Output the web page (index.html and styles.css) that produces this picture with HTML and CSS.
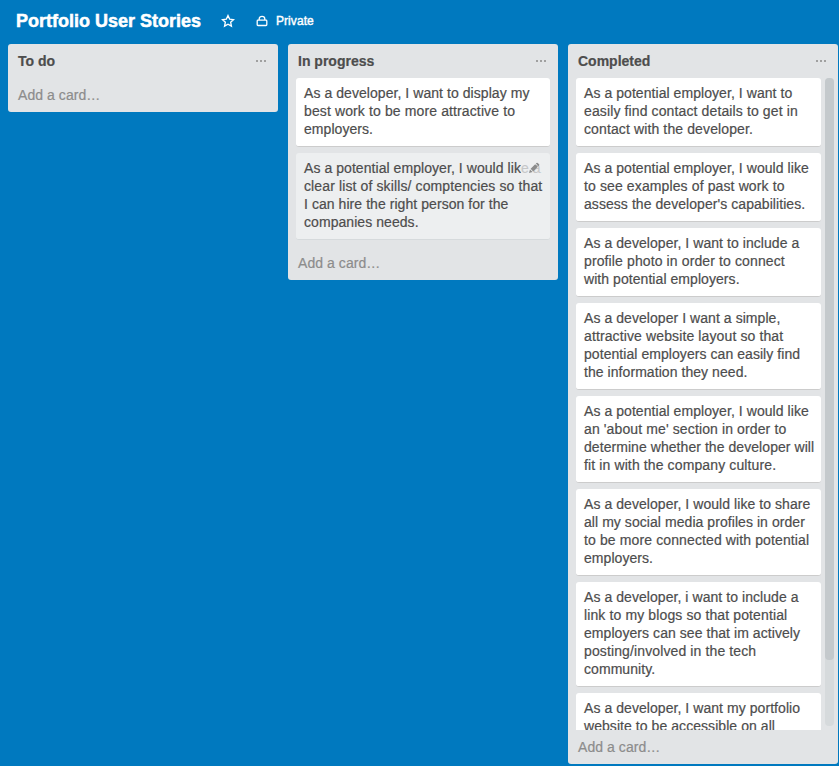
FILE: index.html
```
<!DOCTYPE html>
<html lang="en">
<head>
<meta charset="utf-8">
<title>Portfolio User Stories</title>
<link rel="stylesheet" href="styles.css">
</head>
<body>
<header class="board-header">
  <h1>Portfolio User Stories</h1>
  <svg class="star" viewBox="0 0 14 14"><path d="M7 1.5l1.65 3.6 3.9.5-2.9 2.65.8 3.9L7 10.2l-3.45 1.95.8-3.9L1.45 5.6l3.9-.5z"/></svg>
  <svg class="lock" viewBox="0 0 12 12"><rect x="1.2" y="5.2" width="9.6" height="5.3" rx=".8"/><path d="M3.2 5V3.8a2.8 2.4 0 0 1 5.6 0V5"/></svg>
  <span class="private">Private</span>
</header>
<main class="board">
  <section class="list">
    <div class="list-header"><h2>To do</h2><span class="menu"><i></i><i></i><i></i></span></div>
    <div class="cards"></div>
    <a class="add">Add a card…</a>
  </section>
  <section class="list">
    <div class="list-header"><h2>In progress</h2><span class="menu"><i></i><i></i><i></i></span></div>
    <div class="cards">
      <article class="card">As a developer, I want to display my<br><span class="wide">best work to be more attractive to</span><br>employers.</article>
      <article class="card hovered">As a potential employer, I would like a<br><span class="wide">clear list of skills/ comptencies so that</span><br>I can hire the right person for the<br>companies needs.<span class="edit"><svg viewBox="0 0 12 12"><path d="M1 11l1-3.6L4.6 10zM2.6 6.8l4.6-4.6 2.6 2.6-4.6 4.6zM7.8 1.6l.7-.7q.6-.5 1.2 0l1.4 1.4q.5.6 0 1.2l-.7.7z"/></svg></span></article>
    </div>
    <a class="add">Add a card…</a>
  </section>
  <section class="list full">
    <div class="list-header"><h2>Completed</h2><span class="menu"><i></i><i></i><i></i></span></div>
    <div class="scroll-area">
      <div class="cards">
        <article class="card">As a potential employer, I want to<br><span class="wide">easily find contact details to get in</span><br><span class="wide">contact with the developer.</span></article>
        <article class="card">As a potential employer, I would like<br><span class="wide">to see examples of past work to</span><br>assess the developer's capabilities.</article>
        <article class="card">As a developer, I want to include a<br><span class="wide">profile photo in order to connect</span><br>with potential employers.</article>
        <article class="card">As a developer I want a simple,<br><span class="wide">attractive website layout so that</span><br>potential employers can easily find<br>the information they need.</article>
        <article class="card">As a potential employer, I would like<br><span class="wide">an 'about me' section in order to</span><br>determine whether the developer will<br><span class="wide">fit in with the company culture.</span></article>
        <article class="card">As a developer, I would like to share<br>all my social media profiles in order<br><span class="wide">to be more connected with potential</span><br>employers.</article>
        <article class="card">As a developer, i want to include a<br><span class="wide">link to my blogs so that potential</span><br>employers can see that im actively<br><span class="wide">posting/involved in the tech</span><br>community.</article>
        <article class="card">As a developer, I want my portfolio<br>website to be accessible on all</article>
      </div>
      <div class="track"><div class="thumb"></div></div>
    </div>
    <a class="add">Add a card…</a>
  </section>
</main>
</body>
</html>
```
FILE: styles.css
```
* { box-sizing: border-box; }
body {
  margin: 0;
  height: 766px;
  overflow: hidden;
  background: #0079bf;
  color: #4d4d4d;
  font: 14px/18px "Liberation Sans", Arial, sans-serif;
  letter-spacing: .06px;
  -webkit-text-stroke: .2px;
}
h1, h2 { margin: 0; }
.board-header {
  display: flex;
  align-items: center;
  height: 44px;
  padding: 0 16px 2px;
  color: #fff;
}
h1 { width: 205px; font-size: 18px; line-height: 24px; letter-spacing: 0; white-space: nowrap; -webkit-text-stroke: .5px; }
.star, .lock { fill: none; stroke: #fff; stroke-width: 1.3; }
.star { width: 14px; height: 14px; }
.lock { width: 12px; height: 12px; margin: 0 8px 0 21px; }
.private { font-size: 12px; -webkit-text-stroke: .4px; }
.board { display: flex; align-items: flex-start; gap: 10px; padding-left: 8px; }
.list {
  flex: 0 0 270px;
  background: #e2e4e6;
  border-radius: 3px;
}
.list-header {
  display: flex;
  justify-content: space-between;
  height: 34px;
  padding: 8px 12px 0 10px;
}
h2 { font-size: 14px; line-height: 18px; letter-spacing: 0; }
.menu { display: flex; gap: 2px; padding-top: 8px; }
.menu i { width: 2px; height: 2px; background: #a0a0a0; }
.cards { display: flex; flex-direction: column; gap: 6px; padding: 0 8px; }
.card {
  position: relative;
  flex: none;
  padding: 6px 0 8px 8px;
  background: #fff;
  border-bottom: 1px solid #ccc;
  border-radius: 3px;
  white-space: nowrap;
}
.wide { letter-spacing: .12px; }
.hovered { background: #edeff0; border-color: #d6dadc; }
.edit {
  position: absolute;
  top: 6px;
  right: 9px;
  width: 20px;
  height: 18px;
  padding: 3px 0 0 7px;
  background: rgba(237, 239, 240, .75);
}
.edit svg { display: block; width: 12px; height: 12px; fill: #8c8c8c; }
.add { display: block; height: 34px; padding: 8px 10px; color: #8c8c8c; }
.list:nth-child(2) .add { height: 40px; padding-top: 14px; }
.full { height: 720px; }
.scroll-area { display: flex; height: 652px; overflow: hidden; }
.scroll-area .cards { width: 257px; padding-right: 4px; }
.track { width: 9px; height: 648px; border-radius: 4px; background: #d6dadc; }
.thumb { height: 582px; border-radius: 4px; background: #c4c9cc; }
```
